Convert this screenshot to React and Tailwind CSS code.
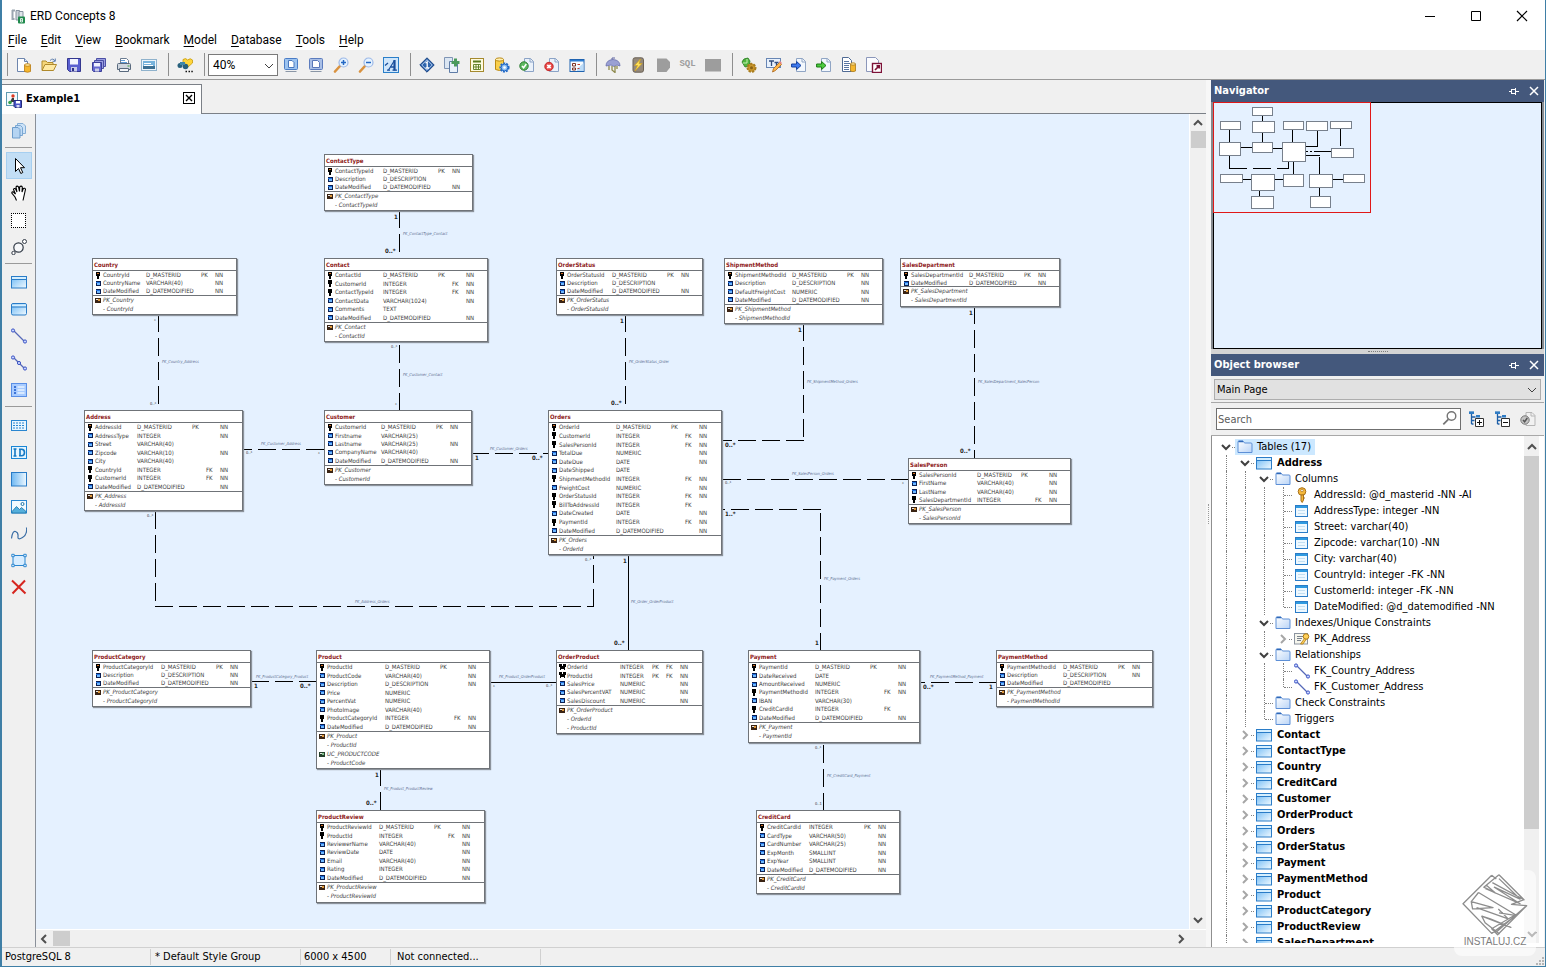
import React from "react";

/* ---------- icons (16 x 16 grid) ---------- */
const page = "M4.5 1.5h6l3 3v10h-9z";
const ICONS = {
  app: (
    <>
      <path d="M2 2.500h3M2.500 2v9h2" stroke="#9aa5b0" strokeWidth="2" fill="none" />
      <path d="M6 2.500h3.500V12H6z" fill="#c9d1d8" stroke="#8793a0" />
      <path d="M9 3.500h4V12H9z" fill="#dfe5ea" stroke="#8793a0" />
      <rect x="8" y="8.500" width="7" height="7" rx="1" fill="#1f8a4c" />
      <path d="M10.500 10.500h2v3.500h-2zM10.500 12.200h2" stroke="#fff" strokeWidth=".8" fill="none" />
    </>
  ),
  newFile: (
    <>
      <path d="M1.500 1.500h7l3 3v10h-10z" fill="#fdfeff" stroke="#6d85ad" />
      <path d="M8.500 1.500v3h3" fill="#dbe6f6" stroke="#6d85ad" />
      <path d="M8.500 8v6.500q3 1.500 6 0V8z" fill="#f5b72e" stroke="#b87a10" strokeWidth=".8" />
      <ellipse cx="11.500" cy="8" rx="3" ry="1.300" fill="#ffe79b" stroke="#b87a10" strokeWidth=".8" />
    </>
  ),
  open: (
    <>
      <path d="M1 13V4h4l1.500 1.500H12V7" fill="#f6d67a" stroke="#b08a2c" />
      <path d="M1 13.500 4 7.500h11.500L12.500 13.500z" fill="#ffe9a3" stroke="#b08a2c" />
      <path d="M9 3.500q3-3 5 .5M14.300 1.500v2.800h-2.800" fill="none" stroke="#5f7fae" />
    </>
  ),
  save: (
    <>
      <path d="M1.500 1.500h13v13h-11l-2-2z" fill="#5a5fd0" stroke="#34378f" />
      <rect x="4" y="2" width="8" height="5.500" fill="#f3f5ff" />
      <rect x="5" y="10" width="6" height="4.500" fill="#c9cce8" />
      <rect x="6" y="11" width="2" height="3" fill="#2c2f86" />
    </>
  ),
  saveAll: (
    <>
      <path d="M5.500 1.500h9v8h-9z" fill="#9a9ee0" stroke="#4b4fa5" />
      <path d="M3.500 3.500h9v8h-9z" fill="#9a9ee0" stroke="#4b4fa5" />
      <path d="M1.500 5.500h9v9h-8l-1-1z" fill="#6468cf" stroke="#3b3f98" />
      <path d="M3 6h6v3.500H3z" fill="#eef0ff" />
      <path d="M4 11.500h4v3H4z" fill="#c9cce8" />
    </>
  ),
  print: (
    <>
      <path d="M4.500 7V1.500h6l2 2V7" fill="#fff" stroke="#6a7c92" />
      <path d="M1.500 7.500q0-1 1-1h11q1 0 1 1v5h-13z" fill="#cfd6de" stroke="#59697d" />
      <path d="M3.500 11.500h9v3h-9z" fill="#f4f6f8" stroke="#59697d" />
      <path d="M5 3.500h4M5 5.500h6" stroke="#5e9bd6" />
      <rect x="11.500" y="8.500" width="2" height="1" fill="#3aa33a" />
    </>
  ),
  picture: (
    <>
      <rect x=".5" y="2.500" width="15" height="11" fill="#eef5fb" stroke="#8fb2cc" />
      <rect x="2" y="4" width="12" height="8" fill="#77b3dc" />
      <path d="M2 9h12v3H2z" fill="#3c7093" />
      <path d="M3 6.500h7M3 8.500h9" stroke="#fff" />
    </>
  ),
  find: (
    <>
      <path d="M6 2.500q3-2 4.500.5 3-2.500 5 0v3L11 10 6 7z" fill="#ffd53a" stroke="#c59a10" strokeWidth=".8" />
      <circle cx="3" cy="8.500" r="2.500" fill="#27607c" />
      <circle cx="8.500" cy="9.500" r="2.800" fill="#27607c" />
      <path d="M3 5h5v3H3z" fill="#3f87a8" />
      <path d="M8.500 14.500h1.500M11.500 14.500h1.500M14.300 14.500h1.500" stroke="#111" strokeWidth="1.600" />
    </>
  ),
  screenFit: (
    <>
      <rect x="1.500" y="1.500" width="13" height="11" rx="1" fill="#9cc3f0" stroke="#4a7cc6" />
      <path d="M5.500 3.500h3.500l2 2v5h-5.500z" fill="#fff" stroke="#4a78be" />
      <path d="M2.500 14.500h11" stroke="#8a96a6" />
    </>
  ),
  screenPage: (
    <>
      <rect x="1.500" y="1.500" width="13" height="11" rx="1" fill="#a9bfe6" stroke="#5c7cbe" />
      <path d="M4.500 3.500h5l2 2v5h-7z" fill="#fff" stroke="#5a78b8" />
      <path d="M2.500 14.500h11" stroke="#8a96a6" />
    </>
  ),
  zoomIn: (
    <>
      <path d="m7 9-5 5.500" stroke="#d9923f" strokeWidth="2.600" strokeLinecap="round" />
      <circle cx="10.500" cy="5.500" r="4.500" fill="#e6f3ff" stroke="#9db9e8" strokeWidth="1.200" />
      <path d="M10.500 3v5M8 5.500h5" stroke="#2468c4" strokeWidth="1.500" />
    </>
  ),
  zoomOut: (
    <>
      <path d="m7 9-5 5.500" stroke="#d9923f" strokeWidth="2.600" strokeLinecap="round" />
      <circle cx="10.500" cy="5.500" r="4.500" fill="#e6f3ff" stroke="#9db9e8" strokeWidth="1.200" />
      <path d="M8 5.500h5" stroke="#2468c4" strokeWidth="1.500" />
    </>
  ),
  fontBox: (
    <>
      <rect x=".5" y=".5" width="15" height="15" fill="#cfe6fb" stroke="#2a7fc9" />
      <path d="m5.500 13 6-9.500" fill="none" stroke="#1a4f9c" strokeWidth="1.200" />
      <path d="M11.500 3v10.500" fill="none" stroke="#1a4f9c" strokeWidth="2.200" />
      <path d="M7.500 10h4M4 13.200h3M9.500 13.200h4.500M2 8.500l3-2.500" fill="none" stroke="#1a4f9c" strokeWidth="1.300" />
    </>
  ),
  diamond: (
    <>
      <path d="m8 .8 7.200 7.200L8 15.200.8 8z" fill="#2f66ae" stroke="#1d4684" />
      <path d="m8 2.800 5.200 5.200L8 13.200 2.800 8z" fill="none" stroke="#cfe0f6" strokeWidth=".8" />
      <path d="M6.500 6 8.200 5v6M6.500 11h3.500" fill="none" stroke="#fff" strokeWidth="1.300" />
    </>
  ),
  copyAdd: (
    <>
      <path d="M.5.500h8v11h-8z" fill="#dbe6f2" stroke="#7f95b5" />
      <path d="M5.500 4.500h8v11h-8z" fill="#e9f1fa" stroke="#5f7ca6" />
      <path d="M11.500 1.500v8M7.500 5.500h8" stroke="#4a9a5c" strokeWidth="3" />
    </>
  ),
  grid: (
    <>
      <rect x="1.500" y="1.500" width="13" height="13" fill="#fffbe0" stroke="#a58a2e" />
      <path d="M4 4.500h8" stroke="#5b7a1f" strokeWidth="2" />
      <path d="M4.500 7.500h7v5h-7zM7 7.500v5M9.500 7.500v5M4.500 10h7" fill="none" stroke="#5b7a1f" strokeWidth=".9" />
    </>
  ),
  dbGear: (
    <>
      <path d="M1.500 2.500v10q4 2 8 0v-10" fill="#f9cf4c" stroke="#bb8a13" />
      <ellipse cx="5.500" cy="2.500" rx="4" ry="1.600" fill="#fff0b3" stroke="#bb8a13" />
      <circle cx="10.500" cy="10.500" r="4.200" fill="#cfe4fb" stroke="#2168c6" strokeWidth="1.800" strokeDasharray="2 1" />
      <circle cx="10.500" cy="10.500" r="3.400" fill="#8fc0f3" stroke="#2168c6" />
      <circle cx="10.500" cy="10.500" r="1.300" fill="#fff" />
    </>
  ),
  check: (
    <>
      <path d={page} fill="#eaf1fa" stroke="#8ba3c6" transform="translate(1 0)" />
      <path d="M11 1.500v3.500h3.500" fill="none" stroke="#8ba3c6" />
      <circle cx="5" cy="9" r="4.200" fill="#5cb85f" stroke="#2f7d33" />
      <path d="m3 9 1.600 1.800L7.300 7" fill="none" stroke="#fff" strokeWidth="1.500" />
    </>
  ),
  cross: (
    <>
      <path d={page} fill="#eaf1fa" stroke="#8ba3c6" transform="translate(1 0)" />
      <path d="M11 1.500v3.500h3.500" fill="none" stroke="#8ba3c6" />
      <circle cx="5" cy="9.500" r="4.200" fill="#e84848" stroke="#c42a2a" />
      <path d="m3.300 7.800 3.400 3.400M6.700 7.800l-3.400 3.400" stroke="#fff" strokeWidth="1.800" />
    </>
  ),
  options: (
    <>
      <rect x="1" y="2.500" width="14" height="12" fill="#f6fbff" stroke="#1f63b0" />
      <path d="M1 3h14v1.500H1z" fill="#2b7bd1" />
      <path d="M8 14V12l6.500-6v8z" fill="#bcdcf8" />
      <path d="M3.500 6.500h3v2.500h-3zM3.500 11h3v2h-3z" fill="#fff" stroke="#7a3325" />
      <path d="M8.500 7.500h2.500M8.500 11.500h2" stroke="#c23b2a" />
    </>
  ),
  umbrella: (
    <>
      <path d="M1 9q0-6 7-6.500 7 .5 7 6.500l-3-1-3 1.500L6 8z" fill="#9aa0d4" stroke="#6a70ac" strokeWidth=".8" />
      <path d="M4 9v4M7 9v4l3 2.500V9M12 9v3" stroke="#8e8a4e" fill="none" strokeWidth="1.300" />
      <path d="M7 2.500V1h3" stroke="#5d63a0" fill="none" />
    </>
  ),
  bolt: (
    <>
      <rect x="3" y=".8" width="10.500" height="14.400" rx="2" fill="#94897b" stroke="#6a6156" />
      <path d="m10.500 2-6 6.500h3L5 14l7-7.500H9z" fill="#ffe25a" stroke="#d0a020" strokeWidth=".7" />
    </>
  ),
  grayTag: <path d="M2 1.500h9.500L15 5v5.500L11.500 15H2z" fill="#9d9d9d" />,
  graySquare: <path d="M0 2h16v12.500H0z" fill="#9d9d9d" />,
  gears: (
    <>
      <path d="M1 5q1-4 6-4l2 3-1 5-4 1z" fill="#4fb53f" stroke="#2b7a22" strokeWidth=".8" />
      <path d="M2 6h4V2" stroke="#c7f0b5" fill="none" />
      <circle cx="10.500" cy="10.800" r="4" fill="#c9962c" stroke="#a87c1e" strokeWidth="2" strokeDasharray="2.200 1.200" />
      <circle cx="10.500" cy="10.800" r="1.500" fill="#8a6214" />
    </>
  ),
  textEdit: (
    <>
      <rect x=".5" y="1.500" width="14" height="9" fill="#e8f1fc" stroke="#6886b4" />
      <path d="M3 4h5M5.500 4v5M8.500 5.500h4M10.500 5.500V9" stroke="#334d7c" fill="none" strokeWidth="1.300" />
      <path d="m6.500 15 1-3.500 6-6 2 2-6 6z" fill="#ffb64a" stroke="#a8651a" strokeWidth=".8" />
      <path d="m13 5 1-1 2 2-1 1.200z" fill="#e88" />
    </>
  ),
  importBlue: (
    <>
      <path d={page} fill="#f2f7fd" stroke="#90a5c4" transform="translate(1 0)" />
      <path d="M11 1.500v3.500h3.500" fill="none" stroke="#90a5c4" />
      <path d="M.6 7h5V4.500L10 8.500l-4.400 4V10h-5z" fill="#3f7af0" stroke="#123f9c" />
    </>
  ),
  importGreen: (
    <>
      <path d={page} fill="#f2f7fd" stroke="#90a5c4" transform="translate(1 0)" />
      <path d="M11 1.500v3.500h3.500" fill="none" stroke="#90a5c4" />
      <path d="M.6 7h5V4.500L10 8.500l-4.400 4V10h-5z" fill="#4ccc3f" stroke="#1b7a14" />
    </>
  ),
  docDb: (
    <>
      <path d="M1.500.500h6l3 3v11h-9z" fill="#fff" stroke="#4f6a94" />
      <path d="M3 4.500h5M3 6.500h6M3 8.500h5M3 10.500h5M3 12.500h5" stroke="#5a76a3" />
      <path d="M9.500 7v7q2.500 1.300 5 0V7z" fill="#f5b72e" stroke="#a8781a" strokeWidth=".8" />
      <ellipse cx="12" cy="7" rx="2.500" ry="1.200" fill="#ffe79b" stroke="#a8781a" strokeWidth=".8" />
    </>
  ),
  exportRed: (
    <>
      <path d="M.5.500h9l3 3v11h-12z" fill="#fbfcff" stroke="#8b97ba" />
      <rect x="6.500" y="6.500" width="9" height="9" fill="#fff" stroke="#7d1238" strokeWidth="1.400" />
      <path d="m9 13 4-4M10.500 8.800h2.700v2.700" fill="none" stroke="#7d1238" strokeWidth="1.700" />
    </>
  ),
  docSave: (
    <>
      <rect x=".5" y=".5" width="11" height="13" fill="#f3fafd" stroke="#5f9ab0" />
      <circle cx="7" cy="4" r="1.700" fill="#e03b22" />
      <path d="M6 6h2v4H4z" fill="#3d3d3d" />
      <circle cx="4" cy="10.500" r="1.800" fill="#36a14a" />
      <path d="M8 8.500h7.500v7H9l-1-1z" fill="#4a55c8" stroke="#252c7e" />
      <path d="M10 9h4v2.500h-4z" fill="#fff" />
      <path d="M10.500 13h3v2.500h-3z" fill="#d6d9f4" />
    </>
  ),
  pages: (
    <>
      <path d="M6.500.500h5.500l2.500 2.500v7.500h-8z" fill="#cde3f8" stroke="#86afd6" />
      <path d="M4.500 2.500h5l2 2v8h-7z" fill="#c2dcf5" stroke="#7ba7d2" />
      <path d="M1.500 4.500h5.500l2 2v8.500h-7.500z" fill="#b5d4f2" stroke="#6d9ccb" />
    </>
  ),
  cursor: <path d="M4.500.500v13l3-3 2.300 5 2-1-2.300-4.800h4z" fill="#fff" stroke="#000" />,
  hand: (
    <path d="M5.500 15.500 4 12 .8 8q0-1.500 1.700-1L4.500 9 2.500 4.500Q3 3 4.500 3.800L6 7 5 2Q6 .3 7.500 1.800L8.500 6.500 8.700 1.800q1.500-1.500 2.600.2L11 7l1.300-3.500q1.700-.8 2.200.8L13 11l-1 4.500" fill="#fff" stroke="#000" strokeWidth="1.100" />
  ),
  marquee: (
    <>
      <path d="M.5 1.500h14v14H.5z" fill="#fff" />
      <path d="M0 1.500h15M0 15.500h15M.5 1v15M14.500 1v15" stroke="#000" strokeDasharray="1 1" />
    </>
  ),
  lasso: (
    <>
      <circle cx="7.500" cy="8.500" r="4.700" fill="#f7f8fa" stroke="#333b47" strokeWidth="1.200" />
      <circle cx="13.500" cy="2.500" r="2" fill="#fff" stroke="#333b47" />
      <circle cx="2.500" cy="14" r="1.700" fill="#fff" stroke="#333b47" />
    </>
  ),
  table: (
    <>
      <rect x=".5" y="2.500" width="15" height="11.500" fill="url(#gTable)" stroke="#2a7cc7" />
      <path d="M1 3h14v2H1z" fill="#d5efff" />
      <path d="M.5 5.500h15" stroke="#2a7cc7" />
    </>
  ),
  tableRound: (
    <>
      <rect x=".5" y="2.500" width="15" height="11.500" rx="1.500" fill="url(#gTable)" stroke="#2a7cc7" />
      <path d="M1 3.500h14v2H1z" fill="#d5efff" />
      <path d="M.5 6h15" stroke="#2a7cc7" />
    </>
  ),
  relation: (
    <>
      <path d="m2 2 12 12" stroke="#5568b8" strokeWidth="1.200" />
      <circle cx="2" cy="2.500" r="1.600" fill="#c9d6ff" stroke="#3b53c4" />
      <circle cx="14" cy="13.500" r="1.600" fill="#c9d6ff" stroke="#3b53c4" />
    </>
  ),
  relationMid: (
    <>
      <path d="m2 2 12 12" stroke="#5568b8" strokeWidth="1.200" />
      <circle cx="2" cy="2.500" r="1.600" fill="#c9d6ff" stroke="#3b53c4" />
      <circle cx="8" cy="8" r="1.600" fill="#c9d6ff" stroke="#3b53c4" />
      <circle cx="14" cy="13.500" r="1.600" fill="#c9d6ff" stroke="#3b53c4" />
    </>
  ),
  listView: (
    <>
      <rect x=".5" y="1.500" width="15" height="13" fill="#a9ccff" stroke="#5a8fe6" />
      <path d="M3 5h2M3 8h2M3 11h2" stroke="#3d74d6" strokeWidth="2" />
      <path d="M6.500 5h7M6.500 8h7M6.500 11h7" stroke="#e8f2ff" strokeWidth="1.300" />
    </>
  ),
  note: (
    <>
      <rect x=".5" y="3.500" width="15" height="10" fill="#e9f6ff" stroke="#2a86d0" />
      <path d="M2 6h12M2 8.500h12M2 11h12" stroke="#2a86d0" strokeDasharray="2 1" />
    </>
  ),
  idBox: (
    <>
      <rect x=".5" y="2.500" width="15" height="12" fill="#e4f5ff" stroke="#1a86d6" />
      <path d="M2.500 5h3M4 5v7M2.500 12h3M8 5.200h2.500q3 0 3 3.300t-3 3.300H8M9 5v7" fill="none" stroke="#1578c4" strokeWidth="1.600" />
    </>
  ),
  rectFill: <rect x=".5" y="1.500" width="15" height="13.500" fill="url(#gRect)" stroke="#2a7cc7" />,
  image: (
    <>
      <rect x=".5" y="2.500" width="15" height="12.500" fill="#f3faff" stroke="#2a86d0" />
      <path d="m1 13.500 4.500-5 3 3 2-2 4.500 4v1.500H1z" fill="#56b0dc" stroke="#1b74a8" strokeWidth=".8" />
      <circle cx="11.500" cy="6" r="1.500" fill="#fff" stroke="#1b74a8" />
    </>
  ),
  curve: <path d="M.5 13.500q1-8 4-7t2.500 5 4.500 1 4-10" fill="none" stroke="#3b6ea5" strokeWidth="1.200" />,
  frame: (
    <>
      <rect x="2" y="3.500" width="12" height="10" fill="#d8edff" stroke="#2a86d0" />
      <path d="M.8 2.300h2.400v2.400H.8zM12.800 2.300h2.400v2.400h-2.400zM.8 12.300h2.400v2.400H.8zM12.800 12.300h2.400v2.400h-2.400z" fill="#fff" stroke="#2a86d0" />
    </>
  ),
  remove: <path d="m1 1.500 13.500 13M14 1.500 1.500 14.500" stroke="#d6261f" strokeWidth="2" />,
  folder: (
    <>
      <path d="M1 13.500V3q0-1 1-1h4l1.500 2H14q1 0 1 1v8.500z" fill="url(#gFolder)" stroke="#5d8fd6" />
      <path d="M1.500 2.500h4.500" stroke="#2f68b8" strokeWidth="1.500" />
    </>
  ),
  key: (
    <>
      <circle cx="8" cy="4.500" r="3.800" fill="#f5b93c" stroke="#a8701a" />
      <circle cx="8" cy="3.500" r="1.200" fill="#fff" stroke="#a8701a" strokeWidth=".7" />
      <path d="M7 8h2.500v5L8.200 15.500 7 14z" fill="#f5b93c" stroke="#a8701a" />
      <path d="M9.500 11h1.500" stroke="#a8701a" />
    </>
  ),
  column: (
    <>
      <rect x="1.500" y="2.500" width="12" height="11" fill="#eef8ff" stroke="#2a7cc7" />
      <path d="M2 4h11" stroke="#2f9ae0" strokeWidth="2" />
      <path d="M4 7.500h7M4 10.500h7" stroke="#c3dff2" />
    </>
  ),
  indexKey: (
    <>
      <rect x=".5" y="2.500" width="13" height="10.500" fill="#f6f6ee" stroke="#8c94a0" />
      <path d="M3 5.500h7M3 7.500h5M3 9.500h4" stroke="#7a828e" />
      <circle cx="12" cy="5.500" r="2.800" fill="#ffd05a" stroke="#b07c14" />
      <path d="m10.500 7.500-4 5.500h2.500l3-4.500z" fill="#ffd05a" stroke="#b07c14" strokeWidth=".8" />
    </>
  ),
  expandAll: (
    <>
      <path d="M1 1.500h5M3.500 2v11M3.500 6h4M3.500 9.500h3M3.500 13h2" stroke="#1d5fa8" fill="none" strokeWidth="1.300" />
      <path d="M1 .5h5v2.500H1zM8 4h4v2.500H8z" fill="#2f7cc4" />
      <path d="M7.500 7.500h8v8h-8z" fill="#fff" stroke="#333" />
      <path d="M9 11.500h5M11.500 9v5" stroke="#111" />
    </>
  ),
  collapseAll: (
    <>
      <path d="M1 1.500h5M3.500 2v11M3.500 6h4M3.500 9.500h3M3.500 13h2" stroke="#1d5fa8" fill="none" strokeWidth="1.300" />
      <path d="M1 .5h5v2.500H1zM8 4h4v2.500H8z" fill="#2f7cc4" />
      <path d="M7.500 7.500h8v8h-8z" fill="#fff" stroke="#333" />
      <path d="M9 11.500h5" stroke="#111" />
    </>
  ),
  checkGray: (
    <>
      <path d={page} fill="#f1f1f1" stroke="#b5b5b5" transform="translate(1.500 0)" />
      <path d="M11 1.500v3.500h4" fill="none" stroke="#b5b5b5" />
      <circle cx="5" cy="9" r="4.200" fill="#c4c4c4" stroke="#777" />
      <path d="m3 9 1.600 1.800L7.300 7" fill="none" stroke="#555" strokeWidth="1.500" />
    </>
  ),
  search: (
    <>
      <circle cx="9.500" cy="6" r="4.300" fill="none" stroke="#757575" strokeWidth="1.400" />
      <path d="m6.300 9.300-5 5" stroke="#757575" strokeWidth="1.800" />
    </>
  ),
};

function Icon({ name, className = "size-4" }) {
  return (
    <svg viewBox="0 0 16 16" className={`${className} shrink-0`} fill="none" aria-hidden="true">
      {ICONS[name]}
    </svg>
  );
}

function Chevron({ dir = "down", className = "size-3 text-[#505050]", width = 2 }) {
  const d = { down: "M2 4l4 4 4-4", up: "M2 8l4-4 4 4", left: "M8 2L4 6l4 4", right: "M4 2l4 4-4 4" }[dir];
  return (
    <svg viewBox="0 0 12 12" className={`${className} shrink-0`} aria-hidden="true">
      <path d={d} fill="none" stroke="currentColor" strokeWidth={width} />
    </svg>
  );
}

function Gradients() {
  return (
    <svg className="absolute size-0" aria-hidden="true">
      <defs>
        <linearGradient id="gTable" x1="0" y1="0" x2="1" y2="1">
          <stop offset="0" stopColor="#6db9f5" />
          <stop offset="1" stopColor="#f2faff" />
        </linearGradient>
        <linearGradient id="gRect" x1="0" y1="0" x2="1" y2="0">
          <stop offset="0" stopColor="#6fb8f2" />
          <stop offset="1" stopColor="#eef8ff" />
        </linearGradient>
        <linearGradient id="gFolder" x1="0" y1="0" x2="1" y2="1">
          <stop offset="0" stopColor="#ffffff" />
          <stop offset="1" stopColor="#b9d4f7" />
        </linearGradient>
      </defs>
    </svg>
  );
}

/* ---------- diagram data ---------- */
const ORIGIN = { x: 36, y: 114 };

// column: [name, type, flags]; P = primary key, F = foreign key, N = not null
const ENTITIES = [
  { name: "ContactType", x: 324, y: 154, r: 473, b: 211, split: 191, t: 383, pk: 438,
    cols: [["ContactTypeId", "D_MASTERID", "PN"], ["Description", "D_DESCRIPTION", ""], ["DateModified", "D_DATEMODIFIED", "N"]],
    idx: [["PK_ContactType", ["ContactTypeId"]]] },
  { name: "Country", x: 92, y: 258, r: 237, b: 315, split: 295, t: 146, pk: 201,
    cols: [["CountryId", "D_MASTERID", "PN"], ["CountryName", "VARCHAR(40)", "N"], ["DateModified", "D_DATEMODIFIED", "N"]],
    idx: [["PK_Country", ["CountryId"]]] },
  { name: "Contact", x: 324, y: 258, r: 488, b: 342, split: 322, t: 383, pk: 438,
    cols: [["ContactId", "D_MASTERID", "PN"], ["CustomerId", "INTEGER", "FN"], ["ContactTypeId", "INTEGER", "FN"], ["ContactData", "VARCHAR(1024)", "N"], ["Comments", "TEXT", ""], ["DateModified", "D_DATEMODIFIED", "N"]],
    idx: [["PK_Contact", ["ContactId"]]] },
  { name: "OrderStatus", x: 556, y: 258, r: 703, b: 315, split: 295, t: 612, pk: 667,
    cols: [["OrderStatusId", "D_MASTERID", "PN"], ["Description", "D_DESCRIPTION", ""], ["DateModified", "D_DATEMODIFIED", "N"]],
    idx: [["PK_OrderStatus", ["OrderStatusId"]]] },
  { name: "ShipmentMethod", x: 724, y: 258, r: 883, b: 324, split: 304, t: 792, pk: 847,
    cols: [["ShipmentMethodId", "D_MASTERID", "PN"], ["Description", "D_DESCRIPTION", "N"], ["DefaultFreightCost", "NUMERIC", "N"], ["DateModified", "D_DATEMODIFIED", "N"]],
    idx: [["PK_ShipmentMethod", ["ShipmentMethodId"]]] },
  { name: "SalesDepartment", x: 900, y: 258, r: 1060, b: 307, split: 286, t: 969, pk: 1024,
    cols: [["SalesDepartmentId", "D_MASTERID", "PN"], ["DateModified", "D_DATEMODIFIED", "N"]],
    idx: [["PK_SalesDepartment", ["SalesDepartmentId"]]] },
  { name: "Address", x: 84, y: 410, r: 243, b: 511, split: 491, t: 137, pk: 192,
    cols: [["AddressId", "D_MASTERID", "PN"], ["AddressType", "INTEGER", "N"], ["Street", "VARCHAR(40)", ""], ["Zipcode", "VARCHAR(10)", "N"], ["City", "VARCHAR(40)", ""], ["CountryId", "INTEGER", "FN"], ["CustomerId", "INTEGER", "FN"], ["DateModified", "D_DATEMODIFIED", "N"]],
    idx: [["PK_Address", ["AddressId"]]] },
  { name: "Customer", x: 324, y: 410, r: 472, b: 485, split: 465, t: 381, pk: 436,
    cols: [["CustomerId", "D_MASTERID", "PN"], ["Firstname", "VARCHAR(25)", ""], ["Lastname", "VARCHAR(25)", "N"], ["CompanyName", "VARCHAR(40)", ""], ["DateModified", "D_DATEMODIFIED", "N"]],
    idx: [["PK_Customer", ["CustomerId"]]] },
  { name: "Orders", x: 548, y: 410, r: 722, b: 555, split: 535, t: 616, pk: 671,
    cols: [["OrderId", "D_MASTERID", "PN"], ["CustomerId", "INTEGER", "FN"], ["SalesPersonId", "INTEGER", "FN"], ["TotalDue", "NUMERIC", "N"], ["DateDue", "DATE", "N"], ["DateShipped", "DATE", ""], ["ShipmentMethodId", "INTEGER", "FN"], ["FreightCost", "NUMERIC", "N"], ["OrderStatusId", "INTEGER", "FN"], ["BillToAddressId", "INTEGER", "F"], ["DateCreated", "DATE", "N"], ["PaymentId", "INTEGER", "FN"], ["DateModified", "D_DATEMODIFIED", "N"]],
    idx: [["PK_Orders", ["OrderId"]]] },
  { name: "SalesPerson", x: 908, y: 458, r: 1071, b: 524, split: 504, t: 977, pk: 1021,
    cols: [["SalesPersonId", "D_MASTERID", "PN"], ["FirstName", "VARCHAR(40)", "N"], ["LastName", "VARCHAR(40)", "N"], ["SalesDepartmentId", "INTEGER", "FN"]],
    idx: [["PK_SalesPerson", ["SalesPersonId"]]] },
  { name: "ProductCategory", x: 92, y: 650, r: 251, b: 707, split: 687, t: 161, pk: 216,
    cols: [["ProductCategoryId", "D_MASTERID", "PN"], ["Description", "D_DESCRIPTION", "N"], ["DateModified", "D_DATEMODIFIED", "N"]],
    idx: [["PK_ProductCategory", ["ProductCategoryId"]]] },
  { name: "Product", x: 316, y: 650, r: 490, b: 769, split: 731, t: 385, pk: 440,
    cols: [["ProductId", "D_MASTERID", "PN"], ["ProductCode", "VARCHAR(40)", "N"], ["Description", "D_DESCRIPTION", "N"], ["Price", "NUMERIC", ""], ["PercentVat", "NUMERIC", ""], ["PhotoImage", "VARCHAR(40)", ""], ["ProductCategoryId", "INTEGER", "FN"], ["DateModified", "D_DATEMODIFIED", "N"]],
    idx: [["PK_Product", ["ProductId"]], ["UC_PRODUCTCODE", ["ProductCode"]]] },
  { name: "OrderProduct", x: 556, y: 650, r: 703, b: 734, split: 705, t: 620, pk: 652,
    cols: [["OrderId", "INTEGER", "PFN"], ["ProductId", "INTEGER", "PFN"], ["SalesPrice", "NUMERIC", "N"], ["SalesPercentVAT", "NUMERIC", "N"], ["SalesDiscount", "NUMERIC", "N"]],
    idx: [["PK_OrderProduct", ["OrderId", "ProductId"]]] },
  { name: "Payment", x: 748, y: 650, r: 920, b: 743, split: 722, t: 815, pk: 870,
    cols: [["PaymentId", "D_MASTERID", "PN"], ["DateReceived", "DATE", ""], ["AmountReceived", "NUMERIC", "N"], ["PaymentMethodId", "INTEGER", "FN"], ["IBAN", "VARCHAR(30)", ""], ["CreditCardId", "INTEGER", "F"], ["DateModified", "D_DATEMODIFIED", "N"]],
    idx: [["PK_Payment", ["PaymentId"]]] },
  { name: "PaymentMethod", x: 996, y: 650, r: 1153, b: 707, split: 687, t: 1063, pk: 1118,
    cols: [["PaymentMethodId", "D_MASTERID", "PN"], ["Description", "D_DESCRIPTION", "N"], ["DateModified", "D_DATEMODIFIED", ""]],
    idx: [["PK_PaymentMethod", ["PaymentMethodId"]]] },
  { name: "ProductReview", x: 316, y: 810, r: 485, b: 903, split: 882, t: 379, pk: 434,
    cols: [["ProductReviewId", "D_MASTERID", "PN"], ["ProductId", "INTEGER", "FN"], ["ReviewerName", "VARCHAR(40)", "N"], ["ReviewDate", "DATE", "N"], ["Email", "VARCHAR(40)", "N"], ["Rating", "INTEGER", "N"], ["DateModified", "D_DATEMODIFIED", "N"]],
    idx: [["PK_ProductReview", ["ProductReviewId"]]] },
  { name: "CreditCard", x: 756, y: 810, r: 900, b: 894, split: 874, t: 809, pk: 864,
    cols: [["CreditCardId", "INTEGER", "PN"], ["CardType", "VARCHAR(50)", "N"], ["CardNumber", "VARCHAR(25)", "N"], ["ExpMonth", "SMALLINT", "N"], ["ExpYear", "SMALLINT", "N"], ["DateModified", "D_DATEMODIFIED", "N"]],
    idx: [["PK_CreditCard", ["CreditCardId"]]] },
];

const DASHED = [
  "M399.500 210V252", "M158.500 314V404", "M399.500 345V410", "M324 449.500H243", "M471 453.500H548",
  "M625.500 314V404", "M803.500 323V440", "M804 440.500H722", "M974.500 306V458", "M909 479.500H722",
  "M821 509.500H722", "M820.500 513V650", "M155.500 511V606", "M155 606.500H593", "M593.500 607V555",
  "M251 681.500H316", "M380.500 768V810", "M997 682.500H920", "M823.500 745V811",
];
const SOLID = ["M628.500 555V650", "M490 682.500H556"];

const FK_LABELS = [
  [403, 234, "FK_ContactType_Contact"], [162, 362, "FK_Country_Address"], [403, 375, "FK_Customer_Contact"],
  [261, 444, "FK_Customer_Address"], [490, 449, "FK_Customer_Orders"], [629, 362, "FK_OrderStatus_Order"],
  [807, 382, "FK_ShipmentMethod_Orders"], [978, 382, "FK_SalesDepartment_SalesPerson"], [792, 474, "FK_SalesPerson_Orders"],
  [824, 579, "FK_Payment_Orders"], [355, 602, "FK_Address_Orders"], [631, 602, "FK_Order_OrderProduct"],
  [256, 677, "FK_ProductCategory_Product"], [499, 677, "FK_Product_OrderProduct"], [384, 789, "FK_Product_ProductReview"],
  [930, 677, "FK_PaymentMethod_Payment"], [827, 776, "FK_CreditCard_Payment"],
];

const CARDS = [
  [394, 217, "1"], [385, 251, "0..*"], [475, 458, "1"], [532, 458, "0..*"], [620, 321, "1"], [611, 403, "0..*"],
  [798, 330, "1"], [725, 445, "0..*"], [725, 514, "1..*"], [969, 313, "1"], [960, 451, "0..*"], [623, 561, "1"],
  [614, 643, "0..*"], [254, 686, "1"], [300, 686, "0..*"], [375, 775, "1"], [366, 803, "0..*"], [815, 643, "1"],
  [923, 687, "0..*"], [989, 687, "1"],
];
const SMALL_CARDS = [
  [154, 321, "*"], [150, 404, "0..*"], [391, 347, "0..*"], [395, 405, "*"], [246, 453, "0..*"], [318, 454, "*"],
  [725, 483, "0..*"], [902, 484, "*"], [585, 560, "0..*"], [147, 516, "0..*"], [493, 687, "*"], [546, 686, "0..*"],
  [815, 748, "0..*"], [815, 804, "0..1"],
];

function RowIcon({ flags }) {
  const p = flags.includes("P");
  const f = flags.includes("F");
  return (
    <svg viewBox="0 0 7 7" className="ml-[2px] block size-[7px]" aria-hidden="true">
      {p && f ? (
        <path d="M0 0h3v3h-1v3h-1v-3h-1zM4 0h3v3h-1v3h-1v-3h-1zM2 2h3v3h-3z" fill="#000" />
      ) : p || f ? (
        <>
          <path d="M1 0h4v4h-1v3h-2v-3h-1z" fill="#000" />
          {p && <path d="M2 1h2v1h-2z" fill="#d0691e" />}
        </>
      ) : (
        <>
          <path d="M1 1h5v5h-5z" fill="#0b1f52" />
          <path d="M1 2h4v1h-4z" fill="#1e6fe0" />
          <path d="M2 3h3v2h-3z" fill="#6fb8ff" />
        </>
      )}
    </svg>
  );
}

function IndexIcon({ unique }) {
  return (
    <svg viewBox="0 0 7 7" className="ml-[2px] block size-[7px]" aria-hidden="true">
      <path d="M0 2h6v5h-6z" fill={unique ? "#25402b" : "#3a2414"} />
      <path d="M1 3h2v1h-2z" fill="#e8e8e8" />
      <path d="M3 3h2v2h-2z" fill={unique ? "#7fc08a" : "#e09a3c"} />
    </svg>
  );
}

function Entity({ e }) {
  const hasFk = e.cols.some((c) => c[2].includes("F"));
  return (
    <section
      aria-label={e.name}
      className="absolute flex flex-col overflow-hidden border border-[#6f7378] bg-white text-[6px] leading-[8px] text-[#3c3c3c] shadow-[1px_1px_1px_#8c939c]"
      style={{ left: e.x - ORIGIN.x, top: e.y - ORIGIN.y, width: e.r - e.x, height: e.b - e.y }}
    >
      <h3 className="h-3 shrink-0 border-b border-[#6f7378] pl-px pt-px font-bold leading-[9px] text-[#8e1a1a]">{e.name}</h3>
      <div className="shrink-0 border-b border-[#6f7378]" style={{ height: e.split - e.y - 12 }}>
        <table className="h-full w-full table-fixed border-collapse">
          <colgroup>
            <col style={{ width: 10 }} />
            <col style={{ width: e.t - e.x - 11 }} />
            <col style={{ width: e.pk - e.t }} />
            <col style={{ width: 14 }} />
            {hasFk && <col style={{ width: 14 }} />}
            <col />
          </colgroup>
          <tbody>
            {e.cols.map(([name, type, flags]) => (
              <tr key={name} className="whitespace-nowrap">
                <td className="p-0 align-middle"><RowIcon flags={flags} /></td>
                <td className="p-0 align-middle">{name}</td>
                <td className="p-0 align-middle">{type}</td>
                <td className="p-0 align-middle">{flags.includes("P") ? "PK" : ""}</td>
                {hasFk && <td className="p-0 align-middle">{flags.includes("F") ? "FK" : ""}</td>}
                <td className="p-0 align-middle">{flags.includes("N") ? "NN" : ""}</td>
              </tr>
            ))}
          </tbody>
        </table>
      </div>
      <ul className="italic leading-[8px]">
        {e.idx.map(([name, keys]) => (
          <li key={name}>
            <div className="flex h-[9px]">
              <span className="w-[10px]"><IndexIcon unique={name.startsWith("UC")} /></span>
              {name}
            </div>
            {keys.map((k) => (
              <div key={k} className="h-[9px] pl-[10px]">- {k}</div>
            ))}
          </li>
        ))}
      </ul>
    </section>
  );
}

function Diagram() {
  return (
    <div className="relative min-w-0 flex-1 overflow-hidden bg-[#e5f1ff] font-['DejaVu_Sans_Condensed','DejaVu_Sans',sans-serif]">
      <svg className="absolute left-0 top-0 h-[816px] w-[1153px]" viewBox="36 114 1153 816" shapeRendering="crispEdges" aria-hidden="true">
        <g fill="none" stroke="#000">
          {DASHED.map((d) => <path key={d} d={d} strokeDasharray="18 6" />)}
          {SOLID.map((d) => <path key={d} d={d} />)}
        </g>
      </svg>
      {ENTITIES.map((e) => <Entity key={e.name} e={e} />)}
      {FK_LABELS.map(([x, y, t]) => (
        <span key={t} className="absolute whitespace-nowrap text-[4px] italic leading-[6px] text-[#5d6f91]" style={{ left: x - ORIGIN.x, top: y - ORIGIN.y - 3 }}>{t}</span>
      ))}
      {CARDS.map(([x, y, t]) => (
        <span key={`${x}-${y}`} className="absolute whitespace-nowrap text-[6px] font-bold leading-[8px] text-[#222]" style={{ left: x - ORIGIN.x, top: y - ORIGIN.y - 4 }}>{t}</span>
      ))}
      {SMALL_CARDS.map(([x, y, t]) => (
        <span key={`${x}-${y}`} className="absolute whitespace-nowrap text-[4px] leading-[6px] text-[#333]" style={{ left: x - ORIGIN.x, top: y - ORIGIN.y - 3 }}>{t}</span>
      ))}
    </div>
  );
}

/* ---------- window chrome ---------- */
function TitleBar() {
  return (
    <header className="flex h-[31px] shrink-0 items-center bg-white pl-[8px] text-[12px] text-black">
      <Icon name="app" />
      <h1 className="ml-1 flex-1">ERD Concepts 8</h1>
      <button aria-label="Minimize" className="flex h-full w-[46px] items-center justify-center">
        <svg viewBox="0 0 12 12" className="size-3"><path d="M1 6.500h10" stroke="#000" /></svg>
      </button>
      <button aria-label="Maximize" className="flex h-full w-[46px] items-center justify-center">
        <svg viewBox="0 0 12 12" className="size-3"><path d="M1.500 1.500h9v9h-9z" fill="none" stroke="#000" /></svg>
      </button>
      <button aria-label="Close" className="flex h-full w-[46px] items-center justify-center">
        <svg viewBox="0 0 12 12" className="size-3"><path d="m1 1 10 10M11 1 1 11" stroke="#000" strokeWidth="1.200" /></svg>
      </button>
    </header>
  );
}

const MENU = ["File", "Edit", "View", "Bookmark", "Model", "Database", "Tools", "Help"];

function MenuBar() {
  return (
    <nav className="flex h-[19px] shrink-0 items-center gap-[14px] bg-white pl-[6px] text-[12px] text-black">
      {MENU.map((m) => (
        <button key={m} className="leading-[19px]">
          <span className="underline underline-offset-2">{m[0]}</span>{m.slice(1)}
        </button>
      ))}
    </nav>
  );
}

function ToolGroup({ items }) {
  return items.map(([icon, label]) => (
    <button key={label} aria-label={label} className="flex h-6 w-[25px] shrink-0 items-center justify-center">
      {icon === "sql" ? <span className="font-['Liberation_Mono',monospace] text-[9px] font-bold text-[#9d9d9d]">SQL</span> : <Icon name={icon} />}
    </button>
  ));
}

const Sep = () => <span className="ml-[7px] mr-[3px] h-[23px] w-px shrink-0 bg-[#8f8f8f]" />;

function Toolbar() {
  return (
    <div className="flex h-[30px] shrink-0 items-center border-b border-[#9a9a9a] bg-[#f0f0f0]">
      <span className="ml-[5px] mr-[3px] h-[23px] w-px shrink-0 bg-[#8f8f8f]" />
      <ToolGroup items={[["newFile", "New"], ["open", "Open"], ["save", "Save"], ["saveAll", "Save all"], ["print", "Print"], ["picture", "Export picture"]]} />
      <Sep />
      <ToolGroup items={[["find", "Find"]]} />
      <Sep />
      <div className="relative w-[70px]">
        <select aria-label="Zoom" defaultValue="40%" className="block h-[22px] w-full appearance-none border border-[#7a7a7a] bg-white px-1 text-[12px] leading-[18px] text-black">
          <option>40%</option>
          <option>100%</option>
        </select>
        <span className="pointer-events-none absolute right-[3px] top-[6px]"><Chevron width={1} className="size-3 text-[#404040]" /></span>
      </div>
      <ToolGroup items={[["screenFit", "Fit to window"], ["screenPage", "Fit page"], ["zoomIn", "Zoom in"], ["zoomOut", "Zoom out"], ["fontBox", "Fonts"]]} />
      <Sep />
      <ToolGroup items={[["diamond", "Domains"], ["copyAdd", "Add page"], ["grid", "Table list"], ["dbGear", "Generate database"], ["check", "Check model"], ["cross", "Errors"], ["options", "Options"]]} />
      <Sep />
      <ToolGroup items={[["umbrella", "Connect"], ["bolt", "Execute"], ["grayTag", "Procedures"], ["sql", "SQL"], ["graySquare", "Stop"]]} />
      <Sep />
      <ToolGroup items={[["gears", "Reverse engineer"], ["textEdit", "Edit text"], ["importBlue", "Import"], ["importGreen", "Export"], ["docDb", "Script"], ["exportRed", "Report"]]} />
    </div>
  );
}

const TOOLS = [
  [["pages", "Pages"]],
  [["cursor", "Select"], ["hand", "Pan"], ["marquee", "Marquee"], ["lasso", "Select related"]],
  [["table", "Table"], ["tableRound", "View"], ["relation", "Relation"], ["relationMid", "Many to many"], ["listView", "Procedure"]],
  [["note", "Note"], ["idBox", "Identifier"], ["rectFill", "Rectangle"], ["image", "Image"], ["curve", "Curve"], ["frame", "Frame"], ["remove", "Delete"]],
];

function ToolPalette() {
  return (
    <aside className="flex w-[34px] shrink-0 flex-col items-center border-r border-[#8a9099] bg-[#f0f0f0] pt-[3px]">
      {TOOLS.map((group, i) => (
        <React.Fragment key={i}>
          {i > 0 && <span className="mb-1 mt-[3px] h-px w-[27px] shrink-0 bg-[#9a9a9a]" />}
          {group.map(([icon, label]) => (
            <button
              key={label}
              aria-label={label}
              className={`flex h-[27px] w-[26px] shrink-0 items-center justify-center ${icon === "cursor" ? "border border-[#a6cff0] bg-[#c2def5]" : ""}`}
            >
              <Icon name={icon} />
            </button>
          ))}
        </React.Fragment>
      ))}
    </aside>
  );
}

function Workspace() {
  return (
    <main className="flex min-w-0 flex-1 flex-col bg-[#f0f0f0]">
      <div className="flex h-[34px] shrink-0 items-end">
        <div className="flex h-[30px] w-[200px] items-center border-r border-t border-[#7b8087] bg-white pl-1 pr-1">
          <Icon name="docSave" />
          <span className="ml-1 flex-1 font-['DejaVu_Sans_Condensed','DejaVu_Sans',sans-serif] text-[11px] font-bold text-black">Example1</span>
          <button aria-label="Close tab" className="mb-[3px] mr-[2px] flex size-3 items-center justify-center border border-black">
            <svg viewBox="0 0 8 8" className="size-2"><path d="m1 1 6 6M7 1 1 7" stroke="#000" strokeWidth="1.400" /></svg>
          </button>
        </div>
        <div className="h-full flex-1 border-b border-[#7b8087]" />
      </div>
      <div className="flex min-h-0 flex-1">
        <ToolPalette />
        <div className="flex min-w-0 flex-1 flex-col">
          <div className="flex min-h-0 flex-1">
            <Diagram />
            <div className="flex w-[17px] shrink-0 flex-col items-center border-l border-white bg-[#f0f0f0] pb-[3px] pt-[3px]">
              <Chevron dir="up" />
              <div className="mt-[2px] h-[17px] w-[15px] bg-[#cdcdcd]" />
              <div className="flex-1" />
              <Chevron dir="down" />
            </div>
          </div>
          <div className="flex h-[18px] shrink-0 items-center border-t border-white bg-[#f0f0f0] pl-[2px] pr-[19px]">
            <Chevron dir="left" />
            <div className="ml-[3px] h-[15px] w-[17px] bg-[#cdcdcd]" />
            <div className="flex-1" />
            <Chevron dir="right" />
          </div>
        </div>
      </div>
    </main>
  );
}

/* ---------- side panels ---------- */
function PanelTitle({ children }) {
  return (
    <div className="flex h-[22px] shrink-0 items-center bg-[#44587c] pl-[3px] pr-1 text-white">
      <h2 className="flex-1 text-[11px] font-bold">{children}</h2>
      <button aria-label={`Pin ${children}`} className="mr-2">
        <svg viewBox="0 0 12 12" className="size-3" shapeRendering="crispEdges"><path d="M1 6.500h2M3.500 4v5M3 4.500h4M3 8.500h4M7.500 3v7M8 6.500h3" fill="none" stroke="#fff" /></svg>
      </button>
      <button aria-label={`Close ${children}`}>
        <svg viewBox="0 0 12 12" className="size-3"><path d="m2 2 8 8M10 2l-8 8" stroke="#fff" strokeWidth="1.500" /></svg>
      </button>
    </div>
  );
}

const MINI_BOXES = [
  [187, 97, 61, 25], [91, 139, 61, 24], [187, 139, 67, 33], [280, 139, 61, 24], [349, 139, 64, 27], [421, 139, 64, 21],
  [88, 202, 64, 39], [187, 202, 61, 30], [277, 202, 70, 57], [424, 220, 67, 27], [91, 298, 67, 24], [184, 298, 70, 48],
  [280, 298, 61, 36], [358, 298, 70, 39], [460, 298, 64, 24], [184, 364, 67, 36], [361, 364, 61, 33],
];
const MINI_LINES = [
  "M217 122V139M119 163V202M217 172V202M307 163V202M382 166V214H347M451 160V212M152 217H187M248 220H277M372 230H424M347 230H354M347 241H389M388 246V298",
  "M119 241V280H171M189 280H243M261 280H295V259M310 259V298M158 313H184M254 313H280M208 346V364M428 313H460M388 337V364M360 230H367",
];

function Navigator() {
  return (
    <section aria-label="Navigator" className="flex shrink-0 flex-col bg-[#85898e]">
      <PanelTitle>Navigator</PanelTitle>
      <div className="relative ml-[2px] mr-[2px] h-[247px] border border-black bg-[#e5f1ff]">
        <svg className="block h-[245px] w-[327px]" viewBox="72 84 981 735" shapeRendering="crispEdges" aria-hidden="true">
          {MINI_LINES.map((d) => <path key={d} d={d} fill="none" stroke="#000" strokeWidth="3" />)}
          {MINI_BOXES.map(([x, y, w, h]) => (
            <rect key={`${x}-${y}`} x={x} y={y} width={w} height={h} fill="#fff" stroke="#77808c" strokeWidth="3" />
          ))}
        </svg>
        <div className="absolute -left-px -top-px h-[111px] w-[158px] border border-[#e01818]" />
      </div>
    </section>
  );
}

// [level, state, icon, text]
const COLS = ["AddressType: integer -NN", "Street: varchar(40)", "Zipcode: varchar(10) -NN", "City: varchar(40)", "CountryId: integer -FK -NN", "CustomerId: integer -FK -NN", "DateModified: @d_datemodified -NN"];
const TREE = [
  [0, "open", "folder", "Tables (17)"],
  [1, "open", "table", "Address"],
  [2, "open", "folder", "Columns"],
  [3, "leaf", "key", "AddressId: @d_masterid -NN -AI"],
  ...COLS.map((c, i) => [3, i === COLS.length - 1 ? "last" : "leaf", "column", c]),
  [2, "open", "folder", "Indexes/Unique Constraints"],
  [3, "closed", "indexKey", "PK_Address"],
  [2, "open", "folder", "Relationships"],
  [3, "leaf", "relation", "FK_Country_Address"],
  [3, "last", "relation", "FK_Customer_Address"],
  [2, "leaf", "folder", "Check Constraints"],
  [2, "last", "folder", "Triggers"],
  ...["Contact", "ContactType", "Country", "CreditCard", "Customer", "OrderProduct", "Orders", "OrderStatus", "Payment", "PaymentMethod", "Product", "ProductCategory", "ProductReview", "SalesDepartment"].map((t) => [1, "closed", "table", t]),
];

function TreeRow({ row: [level, state, icon, text] }) {
  const isTable = icon === "table";
  return (
    <li className="flex h-4 items-center whitespace-nowrap">
      {Array.from({ length: level }, (_, i) => (
        <span key={i} className="ml-[10px] h-4 w-[9px] shrink-0 border-l border-dotted border-[#808080]" />
      ))}
      {state === "open" || state === "closed" ? (
        <button aria-label={state === "open" ? `Collapse ${text}` : `Expand ${text}`} className="flex h-4 w-[19px] shrink-0 items-center">
          <span className="ml-1"><Chevron dir={state === "open" ? "down" : "right"} className={state === "open" ? "size-3 text-[#404040]" : "size-3 text-[#a6a6a6]"} /></span>
          <span className="w-[3px] border-t border-dotted border-[#808080]" />
        </button>
      ) : (
        <span className="flex h-4 w-[19px] shrink-0 items-center">
          <span className={`ml-[10px] w-px border-l border-dotted border-[#808080] ${state === "last" ? "h-2 self-start" : "h-4"}`} />
          <span className="w-2 border-t border-dotted border-[#808080]" />
        </span>
      )}
      <span className={`flex h-4 items-center pl-[2px] pr-1 ${level === 0 ? "bg-[#cce8ff]" : ""}`}>
        <Icon name={icon} />
        <span className={isTable ? "pl-[5px] font-bold" : "pl-1"}>{text}</span>
      </span>
    </li>
  );
}

function ObjectBrowser() {
  return (
    <section aria-label="Object browser" className="flex min-h-0 flex-1 flex-col bg-[#f0f0f0]">
      <PanelTitle>Object browser</PanelTitle>
      <div className="shrink-0 border-b border-[#a8a8a8] px-[3px] pb-[2px] pt-[3px]">
        <div className="relative">
          <select aria-label="Page" defaultValue="Main Page" className="block h-[21px] w-full appearance-none border border-[#adadad] bg-[#e1e1e1] px-[2px] text-[11px] leading-[17px] text-black">
            <option>Main Page</option>
          </select>
          <span className="pointer-events-none absolute right-[3px] top-[5px]"><Chevron width={1} className="size-3 text-[#404040]" /></span>
        </div>
      </div>
      <div className="flex h-[33px] shrink-0 items-center border-b border-[#a8a8a8] pl-[5px] pr-2">
        <div className="relative flex-1">
          <input type="text" aria-label="Search" placeholder="Search" className="block h-[22px] w-full border border-[#6f6f6f] bg-white pl-px pr-5 text-[11px] placeholder:text-[#5c5c5c]" />
          <span className="pointer-events-none absolute right-[3px] top-[2px]"><Icon name="search" /></span>
        </div>
        <div className="ml-[7px] flex gap-[10px]">
          <button aria-label="Expand all"><Icon name="expandAll" /></button>
          <button aria-label="Collapse all"><Icon name="collapseAll" /></button>
          <button aria-label="Check"><Icon name="checkGray" /></button>
        </div>
      </div>
      <div className="flex min-h-0 flex-1 border-l border-[#8f8f8f] bg-white pb-1">
        <ul className="min-w-0 flex-1 overflow-hidden pl-1 pt-[3px] text-[11px] leading-[16px] text-black">
          {TREE.map((row, i) => <TreeRow key={i} row={row} />)}
        </ul>
        <div className="mr-[5px] flex w-[15px] shrink-0 flex-col items-center bg-[#f0f0f0] pb-[3px] pt-[5px]">
          <Chevron dir="up" />
          <div className="mt-[3px] h-[373px] w-full bg-[#cdcdcd]" />
          <div className="flex-1" />
          <Chevron dir="down" />
        </div>
      </div>
    </section>
  );
}

function StatusBar() {
  return (
    <footer className="flex h-[19px] shrink-0 items-center border-t border-[#d0d0d0] bg-[#f0f0f0] font-['DejaVu_Sans_Condensed','DejaVu_Sans',sans-serif] text-[11px] text-black">
      <span className="w-[149px] border-r border-[#d0d0d0] pl-[3px]">PostgreSQL 8</span>
      <span className="w-[150px] border-r border-[#d0d0d0] pl-1">* Default Style Group</span>
      <span className="w-[90px] border-r border-[#d0d0d0] pl-[3px]">6000 x 4500</span>
      <span className="w-[150px] border-r border-[#d0d0d0] pl-[6px]">Not connected...</span>
      <span className="flex-1" />
      <svg viewBox="0 0 9 9" className="mr-px size-[9px] self-end" aria-hidden="true">
        <path d="M7 0h2v2h-2zM7 3h2v2h-2zM7 6h2v2h-2zM4 3h2v2h-2zM4 6h2v2h-2zM1 6h2v2h-2z" fill="#b5b5b5" />
      </svg>
    </footer>
  );
}

function Watermark() {
  return (
    <div className="pointer-events-none absolute bottom-[10px] right-[9px] flex w-[82px] flex-col items-center rounded-lg bg-white/60 pb-2 pt-1">
      <svg viewBox="0 0 200 188" className="h-[62px] w-[66px]" fill="none" stroke="#8d8d8d" strokeWidth="4" strokeLinejoin="round" aria-hidden="true">
        <path d="M90 4 3 90l87 90 68-50M90 4l14 11M112 2l76 76L92 26M112 2 66 40l36 18L74 34M112 14l64 62-78-36 78 50-106-46M50 56l116 70-54-8M28 84l66 18-62 4zM28 84l22-28M44 102l96 34-30-30M60 128l88 34-62-26-26-8 10 20 44 34M188 78l-38 14 46 4-88 88-18-18 68-40M196 96l-90 78" />
      </svg>
      <span className="font-['Liberation_Sans',sans-serif] text-[10px] leading-[12px] text-[#7d7d7d]">INSTALUJ.CZ</span>
    </div>
  );
}

export default function App() {
  return (
    <div className="relative flex h-screen flex-col overflow-hidden border border-l-2 border-t-0 border-[#3f7fa6] bg-[#f0f0f0] font-['Roboto',sans-serif]">
      <Gradients />
      <TitleBar />
      <MenuBar />
      <Toolbar />
      <div className="flex min-h-0 flex-1">
        <Workspace />
        <div className="flex w-[5px] shrink-0 flex-col items-center justify-center bg-[#f7f7f7]">
          <span className="h-5 border-l border-dotted border-[#9a9a9a]" />
        </div>
        <div className="mr-px flex w-[333px] shrink-0 flex-col font-['DejaVu_Sans_Condensed','DejaVu_Sans',sans-serif]">
          <Navigator />
          <div className="flex h-[5px] shrink-0 items-center justify-center bg-[#d4d4d4]">
            <span className="w-5 border-t border-dotted border-[#7d7d7d]" />
          </div>
          <ObjectBrowser />
        </div>
      </div>
      <StatusBar />
      <Watermark />
    </div>
  );
}
